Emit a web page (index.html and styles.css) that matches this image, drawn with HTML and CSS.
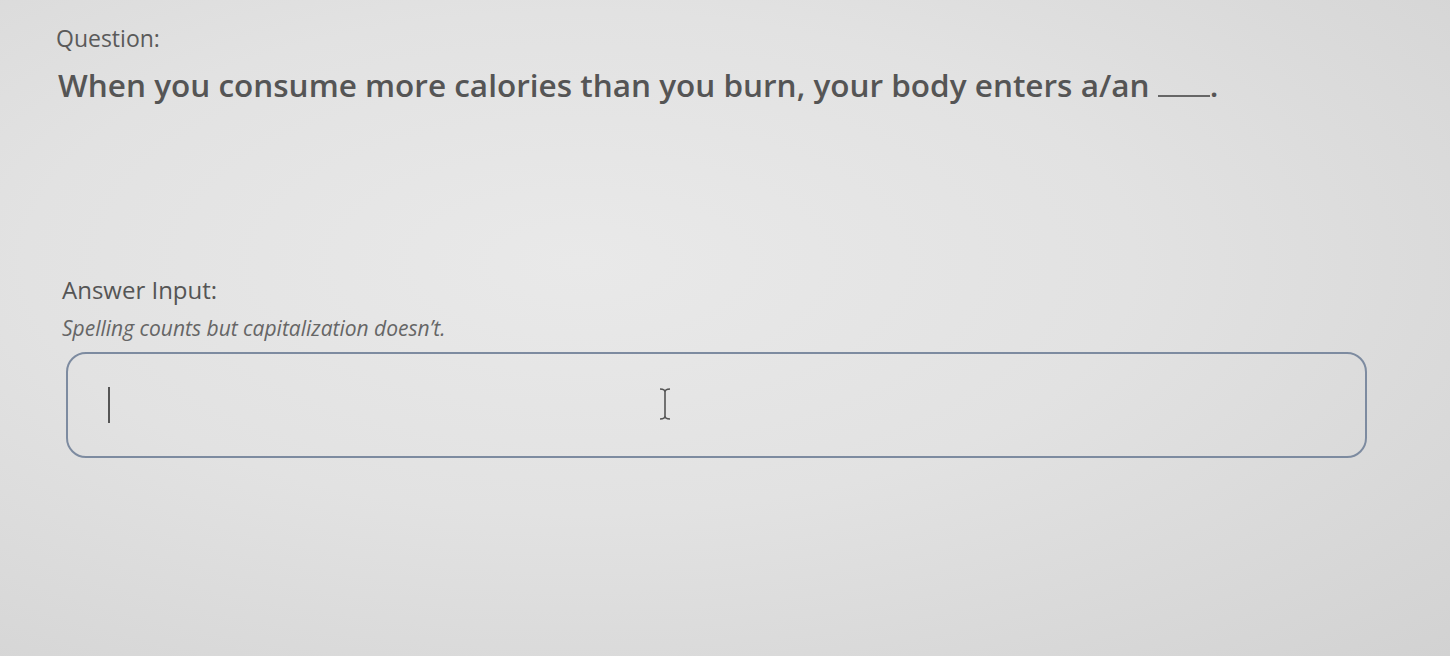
FILE: index.html
```html
<!DOCTYPE html>
<html lang="en">

<head>
  <meta charset="UTF-8">
  <meta name="viewport" content="width=device-width, initial-scale=1.0">
  <title>Question</title>
  <link rel="stylesheet" href="styles.css">
</head>

<body>
  <main class="quiz">
    <section class="question">
      <div class="label">Question:</div>
      <p class="prompt">When you consume more calories than you burn, your body enters a/an <span class="blank"></span>.</p>
    </section>

    <section class="answer">
      <div class="answer-label">Answer Input:</div>
      <div class="hint">Spelling counts but capitalization doesn’t.</div>
      <div class="field">
        <span class="caret"></span>
        <svg class="ibeam" width="12" height="32" viewBox="0 0 12 32">
          <path d="M1 1 Q6 1 6 4 Q6 1 11 1 M6 4 V28 M1 31 Q6 31 6 28 Q6 31 11 31" fill="none" stroke="#555" stroke-width="1.6"/>
        </svg>
      </div>
    </section>
  </main>
</body>

</html>
```

FILE: styles.css
```css
html,
body {
  height: 100%;
}

body {
  margin: 0;
  font-family: "Open Sans", Lato, sans-serif;
  color: #555;
  background-color: #dedede;
  background-image: radial-gradient(ellipse at 40% 40%, #e9e9e9 0%, #e2e2e2 45%, #d2d2d2 100%);
}

.quiz {
  padding: 22px 0 0 56px;
}

.label {
  font-size: 23px;
  color: #5a5a5a;
}

.prompt {
  margin: 9px 0 0 2px;
  font-size: 31.5px;
  font-weight: 600;
  color: #555;
}

.blank {
  display: inline-block;
  width: 52px;
  border-bottom: 2px solid #666;
}

.answer {
  margin-top: 168px;
  padding-left: 6px;
}

.answer-label {
  font-size: 24px;
  line-height: 32px;
  color: #555;
}

.hint {
  margin-top: 9px;
  font-size: 21px;
  line-height: 27px;
  font-style: italic;
  color: #666;
}

.field {
  position: relative;
  display: flex;
  align-items: center;
  box-sizing: border-box;
  width: 1301px;
  height: 106px;
  margin: 10px 0 0 4px;
  padding-left: 40px;
  border: 2px solid #7d8ba0;
  border-radius: 20px;
}

.caret {
  width: 2px;
  height: 36px;
  background-color: #555;
}

/* mouse pointer hovering the field */
.ibeam {
  position: absolute;
  left: 591px;
  top: 34px;
}
```
